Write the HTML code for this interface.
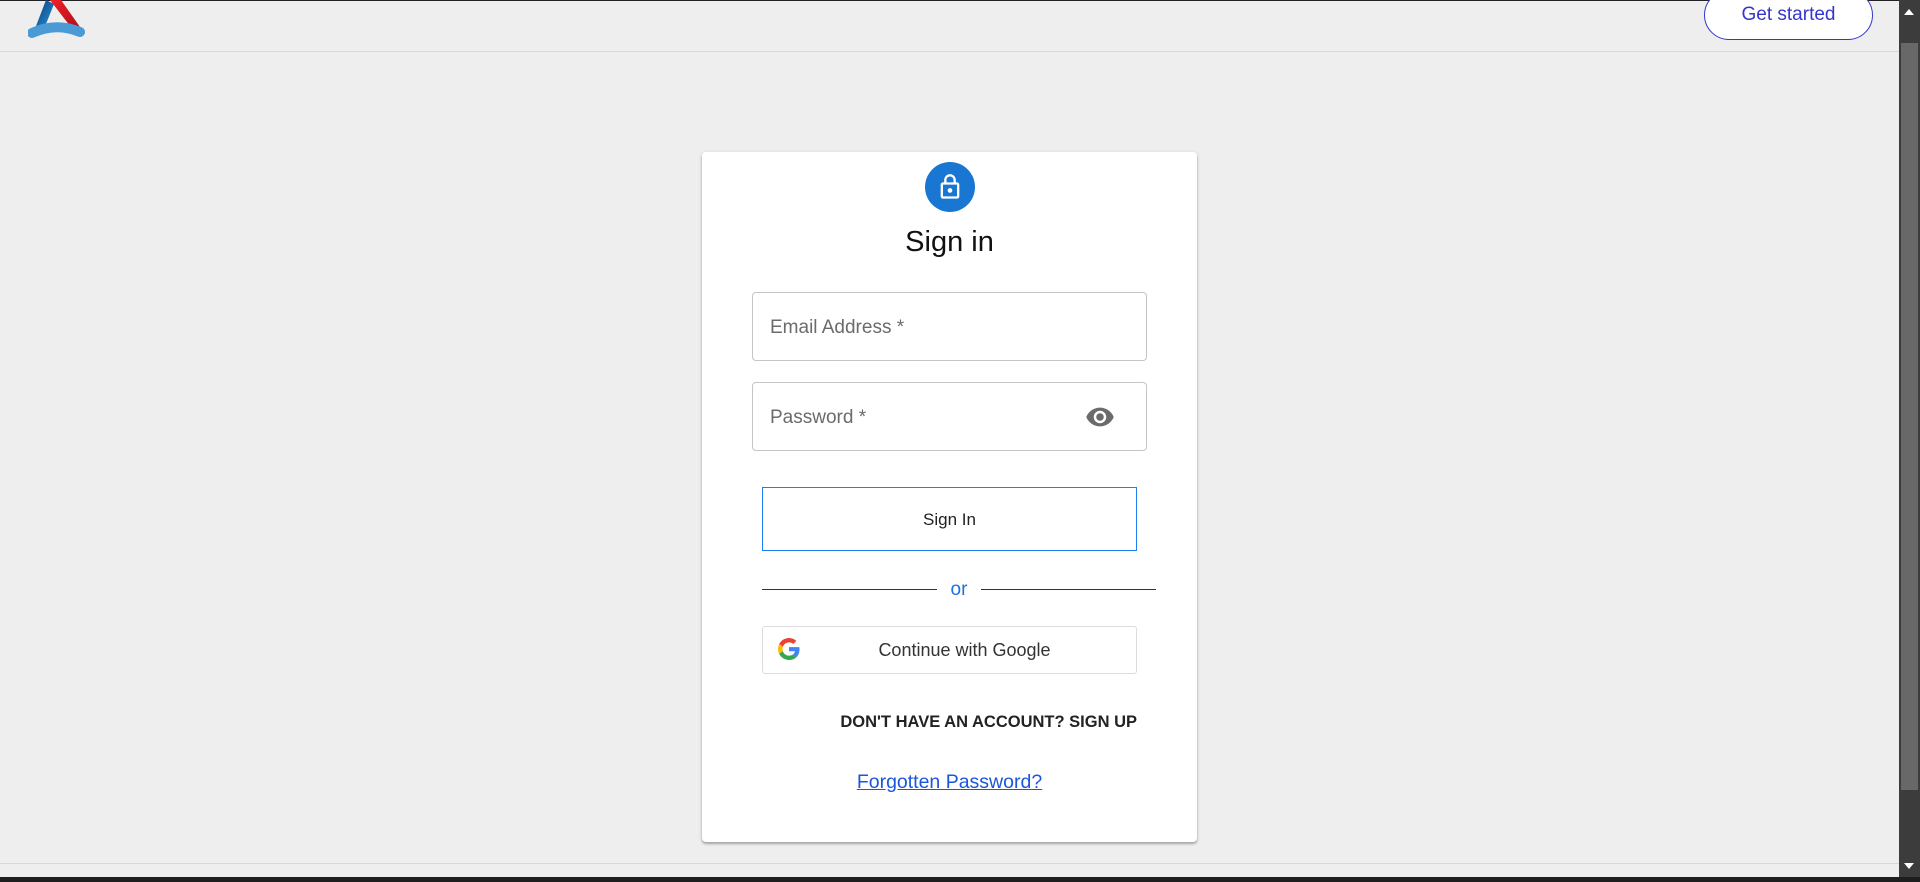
<!DOCTYPE html>
<html><head><meta charset="utf-8"><style>
*{margin:0;padding:0;box-sizing:border-box}
body{width:1920px;height:882px;background:#eeeeee;font-family:"Liberation Sans",Arial,sans-serif;position:relative;overflow:hidden}
.abs{position:absolute}
</style></head><body>
<div class="abs" style="left:0;top:0;width:1899px;height:1px;background:#222"></div>
<svg class="abs" style="left:28px;top:0" width="60" height="42" viewBox="0 0 60 42">
<defs><linearGradient id="b" x1="0" y1="0" x2="1" y2="1"><stop offset="0" stop-color="#0b3f7a"/><stop offset="1" stop-color="#2a8fd8"/></linearGradient>
<linearGradient id="r" x1="0" y1="0" x2="1" y2="1"><stop offset="0" stop-color="#f0202a"/><stop offset="1" stop-color="#b01018"/></linearGradient></defs>
<polygon points="18,0 8,26 18,24 26,4" fill="url(#b)"/>
<polygon points="22,0 33,0 52,27 42,26" fill="url(#r)"/>
<path d="M4,33 Q28,22 52,32" stroke="#4a9ad6" stroke-width="10" stroke-linecap="round" fill="none"/>
</svg>
<div class="abs" style="left:0;top:51px;width:1899px;height:1px;background:#d8d8d8"></div>
<div class="abs" style="left:1704px;top:-10px;width:169px;height:50px;border:1px solid #3535d0;border-radius:26px;background:#fff;color:#3535d0;font-size:19px;text-align:center;line-height:26px;padding-top:11px">Get started</div>
<div class="abs" style="left:1899px;top:0;width:21px;height:877px;background:#3c3c3c"></div>
<div class="abs" style="left:1901px;top:43px;width:17px;height:747px;background:#686868"></div>
<div class="abs" style="left:1904px;top:9px;width:0;height:0;border-left:5px solid transparent;border-right:5px solid transparent;border-bottom:6px solid #fff"></div>
<div class="abs" style="left:1904px;top:863px;width:0;height:0;border-left:5px solid transparent;border-right:5px solid transparent;border-top:6px solid #fff"></div>
<div class="abs" style="left:0;top:863px;width:1899px;height:1px;background:#d8d8d8"></div>
<div class="abs" style="left:0;top:877px;width:1920px;height:5px;background:#1e1e1e"></div>

<div class="abs" style="left:702px;top:152px;width:495px;height:690px;background:#fff;border-radius:4px;box-shadow:0 2px 2px rgba(0,0,0,.25),0 1px 4px rgba(0,0,0,.12)"></div>
<div class="abs" style="left:925px;top:162px;width:50px;height:50px;border-radius:50%;background:#1976d2"></div>
<svg class="abs" style="left:936px;top:173px" width="28" height="28" viewBox="0 0 24 24"><path fill="#fff" d="M18 8h-1V6c0-2.76-2.24-5-5-5S7 3.24 7 6v2H6c-1.1 0-2 .9-2 2v10c0 1.1.9 2 2 2h12c1.1 0 2-.9 2-2V10c0-1.1-.9-2-2-2zM9 6c0-1.66 1.34-3 3-3s3 1.34 3 3v2H9V6zm9 14H6V10h12v10zm-6-3c1.1 0 2-.9 2-2s-.9-2-2-2-2 .9-2 2 .9 2 2 2z"/></svg>
<div class="abs" style="left:702px;top:226px;width:495px;text-align:center;font-size:29px;color:#111">Sign in</div>

<div class="abs" style="left:752px;top:292px;width:395px;height:69px;border:1px solid #c4c4c4;border-radius:4px"></div>
<div class="abs" style="left:770px;top:317px;font-size:19px;color:#6b6b6b">Email Address *</div>
<div class="abs" style="left:752px;top:382px;width:395px;height:69px;border:1px solid #c4c4c4;border-radius:4px"></div>
<div class="abs" style="left:770px;top:407px;font-size:19px;color:#6b6b6b">Password *</div>
<svg class="abs" style="left:1085px;top:402px" width="30" height="30" viewBox="0 0 24 24"><path fill="#6b6b6b" d="M12 4.5C7 4.5 2.73 7.61 1 12c1.73 4.39 6 7.5 11 7.5s9.27-3.11 11-7.5c-1.73-4.39-6-7.5-11-7.5zM12 17c-2.76 0-5-2.24-5-5s2.24-5 5-5 5 2.24 5 5-2.24 5-5 5zm0-8c-1.66 0-3 1.34-3 3s1.34 3 3 3 3-1.34 3-3-1.34-3-3-3z"/></svg>

<div class="abs" style="left:762px;top:487px;width:375px;height:64px;border:1px solid #1e7ff0;text-align:center;line-height:64px;font-size:17px;color:#222">Sign In</div>

<div class="abs" style="left:762px;top:589px;width:175px;height:1px;background:#333"></div>
<div class="abs" style="left:981px;top:589px;width:175px;height:1px;background:#333"></div>
<div class="abs" style="left:940px;top:579px;width:38px;text-align:center;font-size:19px;color:#1e6fe0">or</div>

<div class="abs" style="left:762px;top:626px;width:375px;height:48px;border:1px solid #dadce0;border-radius:3px;text-align:center;line-height:46px;font-size:18px;color:#333;padding-left:30px">Continue with Google</div>
<svg class="abs" style="left:778px;top:638px" width="22" height="22" viewBox="0 0 48 48"><path fill="#EA4335" d="M24 9.5c3.54 0 6.71 1.220 9.21 3.6l6.850-6.850C35.9 2.38 30.47 0 24 0 14.62 0 6.51 5.38 2.56 13.22l7.98 6.19C12.43 13.72 17.74 9.5 24 9.5z"/><path fill="#4285F4" d="M46.98 24.55c0-1.57-.15-3.09-.38-4.55H24v9.02h12.94c-.58 2.96-2.26 5.48-4.78 7.18l7.73 6c4.51-4.18 7.09-10.36 7.09-17.65z"/><path fill="#FBBC05" d="M10.53 28.59c-.48-1.450-.76-2.990-.76-4.590s.27-3.140.76-4.590l-7.980-6.190C.92 16.46 0 20.12 0 24c0 3.88.92 7.54 2.56 10.78l7.97-6.19z"/><path fill="#34A853" d="M24 48c6.48 0 11.93-2.13 15.89-5.81l-7.73-6c-2.15 1.45-4.92 2.3-8.16 2.3-6.26 0-11.57-4.22-13.47-9.91l-7.98 6.19C6.51 42.62 14.62 48 24 48z"/></svg>

<div class="abs" style="left:700px;top:713px;width:437px;text-align:right;font-size:16.5px;font-weight:bold;color:#222;letter-spacing:0">DON'T HAVE AN ACCOUNT? SIGN UP</div>
<div class="abs" style="left:702px;top:771px;width:495px;text-align:center;font-size:19.5px;color:#1a56db;text-decoration:underline">Forgotten Password?</div>
</body></html>
